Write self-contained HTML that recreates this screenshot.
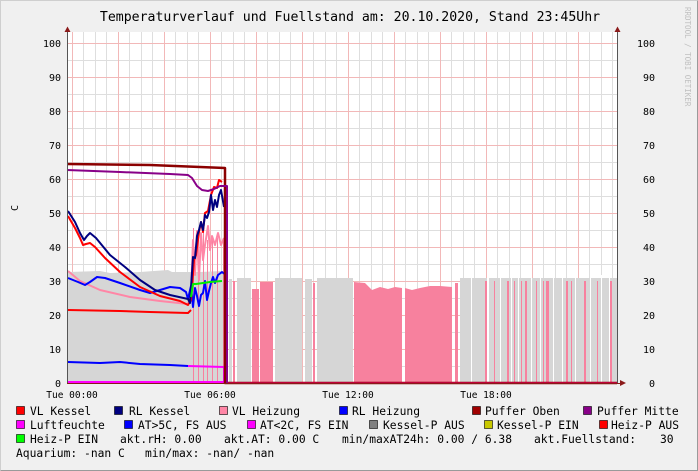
<!DOCTYPE html>
<html><head><meta charset="utf-8"><style>
html,body{margin:0;padding:0;background:#f0f0f0}
svg{display:block}
text{font-family:"DejaVu Sans Mono","Liberation Mono",monospace}
</style></head><body>
<svg width="698" height="471" viewBox="0 0 698 471" xmlns="http://www.w3.org/2000/svg">
<rect x="0" y="0" width="698" height="471" fill="#f0f0f0"/>
<path d="M0.5 470.5V0.5H697.5" stroke="#cfcfcf" fill="none"/>
<path d="M0.5 470.5H697.5V0.5" stroke="#9a9a9a" fill="none"/>
<text x="350" y="21" font-size="13.2" text-anchor="middle" fill="#000">Temperaturverlauf und Fuellstand am: 20.10.2020, Stand 23:45Uhr</text>
<text transform="translate(685,7) rotate(90)" font-size="7.5" fill="#c0c0c0">RRDTOOL / TOBI OETIKER</text>
<rect x="67" y="32" width="550" height="351" fill="#fff"/>
<g stroke="#dedede" stroke-width="1">
<path d="M67 366.5H617M67 332.5H617M67 298.5H617M67 264.5H617M67 230.5H617M67 196.5H617M67 162.5H617M67 128.5H617M67 94.5H617M67 60.5H617"/>
<path d="M83.5 32V383M95.5 32V383M106.5 32V383M129.5 32V383M141.5 32V383M152.5 32V383M175.5 32V383M187.5 32V383M198.5 32V383M221.5 32V383M233.5 32V383M244.5 32V383M267.5 32V383M279.5 32V383M290.5 32V383M313.5 32V383M325.5 32V383M336.5 32V383M359.5 32V383M371.5 32V383M382.5 32V383M405.5 32V383M417.5 32V383M428.5 32V383M451.5 32V383M463.5 32V383M474.5 32V383M497.5 32V383M509.5 32V383M520.5 32V383M543.5 32V383M555.5 32V383M566.5 32V383M589.5 32V383M601.5 32V383M612.5 32V383"/>
</g>
<g stroke="#f2b8b8" stroke-width="1">
<path d="M67 349.5H617M67 315.5H617M67 281.5H617M67 247.5H617M67 213.5H617M67 179.5H617M67 145.5H617M67 111.5H617M67 77.5H617M67 43.5H617"/>
<path d="M72.5 32V383M118.5 32V383M164.5 32V383M210.5 32V383M256.5 32V383M302.5 32V383M348.5 32V383M394.5 32V383M440.5 32V383M486.5 32V383M532.5 32V383M578.5 32V383"/>
</g>
<path d="M68 383V272L100 271L110 273L140 272L168 270L172 272L200 272L222 271L226 273V383Z" fill="#d6d6d6"/>
<g fill="#d6d6d6">
<rect x="229" y="279" width="3" height="104"/><rect x="237" y="278" width="14" height="105"/>
<rect x="275" y="278" width="27" height="105"/><rect x="305" y="279" width="7" height="104"/>
<rect x="317" y="278" width="36" height="105"/><rect x="460" y="278" width="157" height="105"/>
</g>
<g fill="#fff">
<rect x="471" y="275" width="1" height="108"/><rect x="487" y="275" width="2" height="108"/><rect x="500" y="275" width="1" height="108"/><rect x="511" y="275" width="1" height="108"/><rect x="518" y="275" width="1" height="108"/><rect x="531" y="275" width="1" height="108"/><rect x="540" y="275" width="1" height="108"/><rect x="553" y="275" width="1" height="108"/><rect x="562" y="275" width="1" height="108"/><rect x="575" y="275" width="1" height="108"/><rect x="590" y="275" width="1" height="108"/><rect x="601" y="275" width="1" height="108"/><rect x="609" y="275" width="1" height="108"/>
</g>
<g fill="#f7819e">
<rect x="233" y="281" width="2" height="102"/><rect x="252" y="289" width="7" height="94"/><rect x="260" y="282" width="13" height="101"/>
<rect x="313" y="283" width="2" height="100"/>
<path d="M354 383V282L365 283L372 290L380 287L388 289L395 287L402 288V383Z"/>
<path d="M405 383V288L412 290L420 288L430 286L440 286L452 287V383Z"/>
<rect x="455" y="283" width="3" height="100"/>
<rect x="485" y="281" width="2" height="102"/><rect x="494" y="281" width="1" height="102"/><rect x="507" y="281" width="2" height="102"/><rect x="514" y="281" width="1" height="102"/><rect x="521" y="281" width="1" height="102"/><rect x="525" y="281" width="2" height="102"/><rect x="536" y="281" width="1" height="102"/><rect x="543" y="281" width="1" height="102"/><rect x="546" y="281" width="3" height="102"/><rect x="566" y="281" width="2" height="102"/><rect x="571" y="281" width="1" height="102"/><rect x="584" y="281" width="2" height="102"/><rect x="597" y="281" width="1" height="102"/><rect x="610" y="281" width="2" height="102"/>
</g>
<g stroke="#f7819e" stroke-width="1">
<path d="M193.5 228V383M198.5 230V383M203.5 232V383M207.5 240V383M212.5 240V383M217.5 238V383M223.5 240V383"/>
</g>
<g fill="none" stroke-width="2" stroke-linejoin="round">
<polyline stroke="#ff86a6" points="68,271 80,281 100,290 130,297 160,301 188,304 191,295 193,240 195,275 197,231 199,280 201,233 203,260 205,245 208,226 210,250 212,236 215,245 218,233 221,245 224,238"/>
<polyline stroke="#0000ff" points="68,278 78,282 85,285 90,282 97,277 105,278 120,283 140,290 150,293 160,290 170,287 180,288 186,292 188,299 191,286 193,307 195,288 197,296 199,306 201,295 203,293 205,281 207,300 209,291 211,283 213,277 215,283 218,275 222,272 226,275"/>
<polyline stroke="#ff0000" points="68,216 75,228 80,238 83,245 86,244 90,243 95,247 105,258 120,272 140,287 160,296 180,301 188,305 191,300 194,260 196,255 199,232 201,222 203,232 205,213 208,211 211,195 214,187 217,188 219,180 222,182"/>
<polyline stroke="#000080" points="68,211 75,222 80,233 84,240 87,236 90,233 96,238 110,255 125,267 140,280 155,290 170,295 188,299 190,303 193,257 195,258 197,236 199,230 201,222 203,230 205,215 207,218 209,212 211,195 213,210 215,200 217,207 219,195 221,190 224,207"/>
<polyline stroke="#00ee00" points="191,297 193,284 196,284 210,282 222,281"/>
<polyline stroke="#ff0000" points="68,310 120,311 150,312 188,313 191,310"/>
<polyline stroke="#0000ff" points="68,362 100,363 120,362 140,364 170,365 188,366"/>
<polyline stroke="#ff00ff" points="188,366 224,367 224,382"/>
<polyline stroke="#ff00ff" points="68,382 226,382"/>
<polyline stroke="#8b0000" stroke-width="2.5" points="67,164 150,165 200,167 225,168 225,383 617,383"/>
<polyline stroke="#c0003a" points="226,383 617,383"/>
<polyline stroke="#880088" points="67,170 120,172 170,174 188,175 192,178 197,186 202,190 208,191 214,189 220,186 224,186 227,186 227,383"/>
</g>
<path d="M67.5 31V384M617.5 31V384" stroke="#555" stroke-width="1"/>
<path d="M64.5 32L67.5 26.5L70.5 32Z M614.5 32L617.5 26.5L620.5 32Z M620 380L626 383L620 386Z" fill="#8b1a1a"/>
<path d="M67 383.5H621" stroke="#8b1a1a" stroke-width="1"/>
<g font-size="10" fill="#000" text-anchor="end">
<text x="61" y="387">0</text><text x="61" y="353">10</text><text x="61" y="319">20</text><text x="61" y="285">30</text><text x="61" y="251">40</text><text x="61" y="217">50</text><text x="61" y="183">60</text><text x="61" y="149">70</text><text x="61" y="115">80</text><text x="61" y="81">90</text><text x="61" y="47">100</text>
</g>
<g font-size="10" fill="#000" text-anchor="end">
<text x="655" y="387">0</text><text x="655" y="353">10</text><text x="655" y="319">20</text><text x="655" y="285">30</text><text x="655" y="251">40</text><text x="655" y="217">50</text><text x="655" y="183">60</text><text x="655" y="149">70</text><text x="655" y="115">80</text><text x="655" y="81">90</text><text x="655" y="47">100</text>
</g>
<text transform="translate(18,208) rotate(-90)" font-size="10" text-anchor="middle">C</text>
<g font-size="9.5" text-anchor="middle">
<text x="72" y="398">Tue 00:00</text><text x="210" y="398">Tue 06:00</text><text x="348" y="398">Tue 12:00</text><text x="486" y="398">Tue 18:00</text>
</g>
<g stroke="#000" stroke-width="0.6">
<rect x="16.5" y="406.5" width="8" height="8" fill="#ff0000"/><rect x="114.5" y="406.5" width="8" height="8" fill="#000080"/><rect x="219.5" y="406.5" width="8" height="8" fill="#ff86a6"/><rect x="339.5" y="406.5" width="8" height="8" fill="#0000ff"/><rect x="472.5" y="406.5" width="8" height="8" fill="#a00000"/><rect x="583.5" y="406.5" width="8" height="8" fill="#880088"/>
<rect x="16.5" y="420.5" width="8" height="8" fill="#ff00ff"/><rect x="124.5" y="420.5" width="8" height="8" fill="#0000ff"/><rect x="247.5" y="420.5" width="8" height="8" fill="#ff00ff"/><rect x="369.5" y="420.5" width="8" height="8" fill="#808080"/><rect x="484.5" y="420.5" width="8" height="8" fill="#c8c800"/><rect x="599.5" y="420.5" width="8" height="8" fill="#ff0000"/>
<rect x="16.5" y="434.5" width="8" height="8" fill="#00ff00"/>
</g>
<g font-size="11.3" fill="#000">
<text x="30" y="415">VL Kessel</text><text x="129" y="415">RL Kessel</text><text x="232" y="415">VL Heizung</text><text x="352" y="415">RL Heizung</text><text x="485" y="415">Puffer Oben</text><text x="597" y="415">Puffer Mitte</text>
<text x="30" y="429">Luftfeuchte</text><text x="138" y="429">AT&gt;5C, FS AUS</text><text x="260" y="429">AT&lt;2C, FS EIN</text><text x="383" y="429">Kessel-P AUS</text><text x="497" y="429">Kessel-P EIN</text><text x="611" y="429">Heiz-P AUS</text>
<text x="30" y="443">Heiz-P EIN</text><text x="120" y="443">akt.rH: 0.00</text><text x="224" y="443">akt.AT: 0.00 C</text><text x="342" y="443">min/maxAT24h: 0.00 / 6.38</text><text x="534" y="443">akt.Fuellstand:</text><text x="660" y="443">30</text>
<text x="16" y="457">Aquarium: -nan C</text><text x="145" y="457">min/max: -nan/ -nan</text>
</g>
</svg>
</body></html>
